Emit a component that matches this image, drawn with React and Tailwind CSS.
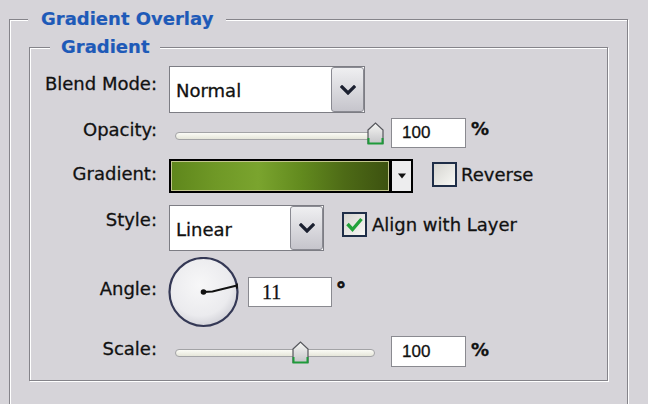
const BG = "bg-[#d6d4d9]";

function Chevron() {
  return (
    <svg width="16" height="10" viewBox="0 0 16 10">
      <polyline points="2,2 8,8 14,2" fill="none" stroke="#1b2030" strokeWidth="3.2" strokeLinecap="square" />
    </svg>
  );
}

function Select({ width, value }) {
  return (
    <div className={`flex ${width} h-full border border-[#7d7d84] bg-white`}>
      <div className="flex-1 flex items-center pl-[6px] pt-[2px] text-[18px]">{value}</div>
      <div className="w-[33px] h-full flex items-center justify-center rounded-[3px] border border-[#8a8a92] bg-gradient-to-b from-[#efeff1] to-[#c6c5cc]">
        <Chevron />
      </div>
    </div>
  );
}

function Thumb() {
  return (
    <svg width="17" height="23" viewBox="0 0 17 23">
      <defs>
        <linearGradient id="tg" x1="0" y1="0" x2="0" y2="1">
          <stop offset="0" stopColor="#f6f6f4" />
          <stop offset="1" stopColor="#c5c5c8" />
        </linearGradient>
      </defs>
      <path d="M1,8 L8.5,1 L16,8 L16,21.5 L1,21.5 Z" fill="url(#tg)" stroke="#55565c" strokeWidth="1.2" />
      <path d="M1.5,16 L1.5,21.5 L15.5,21.5 L15.5,16" fill="none" stroke="#1e9a3a" strokeWidth="2" />
    </svg>
  );
}

function Slider({ thumbLeft, thumbTop, trackTop }) {
  return (
    <div className="relative w-[222px] h-full">
      <div
        className="ml-[6px] w-[200px] h-[8px] rounded-full border border-[#a3a3a6] bg-gradient-to-b from-[#fbfbf6] to-[#e6e6da]"
        style={{ marginTop: trackTop }}
      />
      <div className="absolute" style={{ left: thumbLeft, top: thumbTop }}>
        <Thumb />
      </div>
    </div>
  );
}

function NumBox({ value }) {
  return (
    <div className="w-[75px] h-full border border-[#8a8a90] bg-white flex items-center pl-[10px] text-[17px] [font-family:'Liberation_Sans',sans-serif]">
      {value}
    </div>
  );
}

function Checkbox({ checked }) {
  return (
    <div className="w-[25px] h-[25px] border-2 border-[#1f2e48] bg-gradient-to-br from-[#d6d5d1] to-[#f8f8f5] flex items-center justify-center">
      {checked && (
        <svg width="19" height="17" viewBox="0 0 19 17">
          <polyline points="2.5,8 7.5,13.5 16.5,3" fill="none" stroke="#22a23a" strokeWidth="3.4" />
        </svg>
      )}
    </div>
  );
}

function Label({ children, pt }) {
  return (
    <div className="w-[127px] shrink-0 text-right text-[18px] leading-[22px]" style={{ paddingTop: pt }}>
      {children}
    </div>
  );
}

function Dial() {
  const cx = 35.5, cy = 35, r = 34;
  const a = (11 * Math.PI) / 180;
  const ex = cx + r * Math.cos(a);
  const ey = cy - r * Math.sin(a);
  return (
    <svg width="72" height="71" viewBox="0 0 72 71">
      <defs>
        <radialGradient id="dg" cx="0.45" cy="0.4" r="0.6">
          <stop offset="0" stopColor="#f7f7f8" />
          <stop offset="0.75" stopColor="#ebebee" />
          <stop offset="1" stopColor="#d4d4da" />
        </radialGradient>
      </defs>
      <circle cx={cx} cy={cy} r={r} fill="url(#dg)" stroke="#343855" strokeWidth="2.2" />
      <polyline points={`${cx},${cy} ${cx + 9},${cy - 0.5} ${ex},${ey}`} fill="none" stroke="#111" strokeWidth="2" />
      <line x1={ex} y1={ey - 2} x2={ex} y2={ey + 3} stroke="#111" strokeWidth="2" />
      <circle cx={cx} cy={cy} r="2.8" fill="#111" />
    </svg>
  );
}

export default function App() {
  return (
    <div className={`w-[648px] h-[404px] overflow-hidden ${BG} pt-[8px] pl-[9px] text-[#111] [-webkit-text-stroke:0.3px_#111] [font-family:'DejaVu_Sans',sans-serif]`}>
      <fieldset className="w-[619px] h-[420px] border border-[#85848a] shadow-[inset_1px_1px_0_#fff,1px_1px_0_#fff]">
        <legend className={`ml-[18px] px-[13px] ${BG} text-[18px] leading-[22px] font-bold text-[#1e5ab8] [-webkit-text-stroke:0.2px_#1e5ab8]`}>
          Gradient Overlay
        </legend>
        <fieldset className="ml-[19px] mt-[6px] w-[579px] h-[345px] border border-[#85848a] shadow-[inset_1px_1px_0_#fff,1px_1px_0_#fff]">
          <legend className={`ml-[20px] px-[11px] ${BG} text-[18px] leading-[22px] font-bold text-[#1e5ab8] [-webkit-text-stroke:0.2px_#1e5ab8]`}>
            Gradient
          </legend>
          <div className="flex flex-col pt-[8px]">
            {/* Blend mode */}
            <div className="flex h-[47px]">
              <Label pt="7px">Blend Mode:</Label>
              <div className="ml-[12px] h-full">
                <Select width="w-[196px]" value="Normal" />
              </div>
            </div>
            {/* Opacity */}
            <div className="flex h-[30px] mt-[5px]">
              <Label pt="1px">Opacity:</Label>
              <div className="ml-[12px] flex h-full">
                <Slider thumbLeft={198} thumbTop={4} trackTop={14} />
                <NumBox value="100" />
                <div className="ml-[5px] text-[18px] leading-[22px] font-bold">%</div>
              </div>
            </div>
            {/* Gradient */}
            <div className="flex h-[34px] mt-[11px]">
              <Label pt="4px">Gradient:</Label>
              <div className="ml-[12px] flex h-full">
                <div className="w-[222px] h-full border-2 border-black bg-[#c3c78f] p-[1px]">
                  <div className="w-full h-full bg-[linear-gradient(to_right,#5f871c_0%,#6f9826_20%,#7aa42e_40%,#628a1e_60%,#4d6a16_80%,#3d5210_100%)]" />
                </div>
                <div className="w-[22px] h-full border-2 border-l border-black bg-[#ededee] flex items-center justify-center">
                  <svg width="10" height="6" viewBox="0 0 10 6">
                    <polygon points="1,0.5 9,0.5 5,5.5" fill="#111" />
                  </svg>
                </div>
                <div className="ml-[19px] mt-[3px] h-[25px] flex items-center">
                  <Checkbox />
                  <span className="ml-[4px] text-[18px] leading-[22px]">Reverse</span>
                </div>
              </div>
            </div>
            {/* Style */}
            <div className="flex h-[46px] mt-[12px]">
              <Label pt="4px">Style:</Label>
              <div className="ml-[12px] flex h-full">
                <Select width="w-[155px]" value="Linear" />
                <div className="ml-[18px] mt-[7px] h-[25px] flex items-center">
                  <Checkbox checked />
                  <span className="ml-[5px] text-[18px] leading-[22px]">Align with Layer</span>
                </div>
              </div>
            </div>
            {/* Angle */}
            <div className="flex h-[71px] mt-[6px]">
              <Label pt="21px">Angle:</Label>
              <div className="ml-[11px] flex h-full">
                <Dial />
                <div className="ml-[8px] mt-[20px] w-[84px] h-[30px] border border-[#8a8a90] bg-white flex items-center pl-[13px] text-[20px] [font-family:'Liberation_Serif',serif]">
                  11
                </div>
                <div className="ml-[4px] mt-[21px] text-[20px] leading-[22px] font-bold [-webkit-text-stroke:0.8px_#111]">°</div>
              </div>
            </div>
            {/* Scale */}
            <div className="flex h-[31px] mt-[8px]">
              <Label pt="2px">Scale:</Label>
              <div className="ml-[12px] flex h-full">
                <Slider thumbLeft={123} thumbTop={5} trackTop={13} />
                <NumBox value="100" />
                <div className="ml-[5px] mt-[3px] text-[18px] leading-[22px] font-bold">%</div>
              </div>
            </div>
          </div>
        </fieldset>
      </fieldset>
    </div>
  );
}
